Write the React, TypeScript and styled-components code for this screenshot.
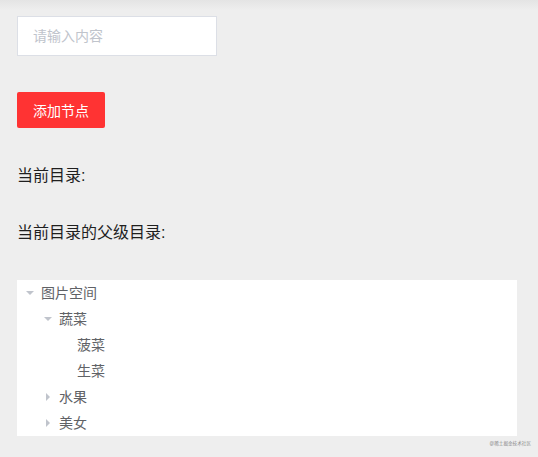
import React from 'react'
import styled, { createGlobalStyle } from 'styled-components'

const GlobalStyle = createGlobalStyle`
  html, body {
    margin: 0;
    padding: 0;
    background: #eeeeee;
  }
  body {
    font-family: "Liberation Sans", "Noto Sans CJK SC", sans-serif;
  }
`

const Page = styled.div`
  position: relative;
  min-height: 457px;
  box-sizing: border-box;
  padding: 16px 21px 0 17px;
  display: flex;
  flex-direction: column;
  align-items: flex-start;
  background: linear-gradient(180deg, #e4e4e4 0px, #eeeeee 10px, #eeeeee 100%);
`

const Input = styled.input`
  box-sizing: border-box;
  width: 200px;
  height: 40px;
  padding: 0 15px;
  border: 1px solid #dcdfe6;
  border-radius: 0;
  background: #ffffff;
  font-family: inherit;
  font-size: 14px;
  color: #606266;
  outline: none;

  &::placeholder {
    color: #c0c4cc;
  }
`

const AddButton = styled.button`
  margin-top: 36px;
  width: 88px;
  height: 36px;
  border: none;
  border-radius: 2px;
  background: #ff3333;
  color: #ffffff;
  font-family: inherit;
  font-size: 14px;
  cursor: pointer;
`

const Label = styled.div<{ $gap: number }>`
  margin-top: ${({ $gap }) => $gap}px;
  font-size: 16px;
  line-height: 24px;
  color: #1f1f1f;
`

const Tree = styled.div`
  margin-top: 35px;
  align-self: stretch;
  background: #ffffff;
`

const Row = styled.div<{ $level: number }>`
  display: flex;
  align-items: center;
  height: 26px;
  line-height: 24px;
  padding-left: ${({ $level }) => $level * 18}px;
  font-size: 14px;
  color: #606266;
`

const Caret = styled.span<{ $open: boolean; $leaf: boolean }>`
  width: 24px;
  height: 26px;
  display: flex;
  align-items: center;
  justify-content: center;

  &::before {
    content: '';
    display: ${({ $leaf }) => ($leaf ? 'none' : 'block')};
    width: 0;
    height: 0;
    border-left: 4px solid #c0c4cc;
    border-top: 4px solid transparent;
    border-bottom: 4px solid transparent;
    margin-left: 2px;
    transform: rotate(${({ $open }) => ($open ? 90 : 0)}deg);
  }
`

const Watermark = styled.span`
  position: absolute;
  right: 7px;
  bottom: 11px;
  font-size: 4.6px;
  color: #8a8a8a;
  white-space: nowrap;
`

type Node = { label: string; level: number; open?: boolean; leaf?: boolean }

const nodes: Node[] = [
  { label: '图片空间', level: 0, open: true },
  { label: '蔬菜', level: 1, open: true },
  { label: '菠菜', level: 2, leaf: true },
  { label: '生菜', level: 2, leaf: true },
  { label: '水果', level: 1 },
  { label: '美女', level: 1 },
]

const App = () => {
  return (
    <>
      <GlobalStyle />
      <Page>
        <Input placeholder="请输入内容" />
        <AddButton>添加节点</AddButton>
        <Label $gap={36}>当前目录:</Label>
        <Label $gap={33}>当前目录的父级目录:</Label>
        <Tree>
          {nodes.map((n) => (
            <Row key={n.label} $level={n.level}>
              <Caret $open={!!n.open} $leaf={!!n.leaf} />
              {n.label}
            </Row>
          ))}
        </Tree>
        <Watermark>@稀土掘金技术社区</Watermark>
      </Page>
    </>
  )
}

export default App
